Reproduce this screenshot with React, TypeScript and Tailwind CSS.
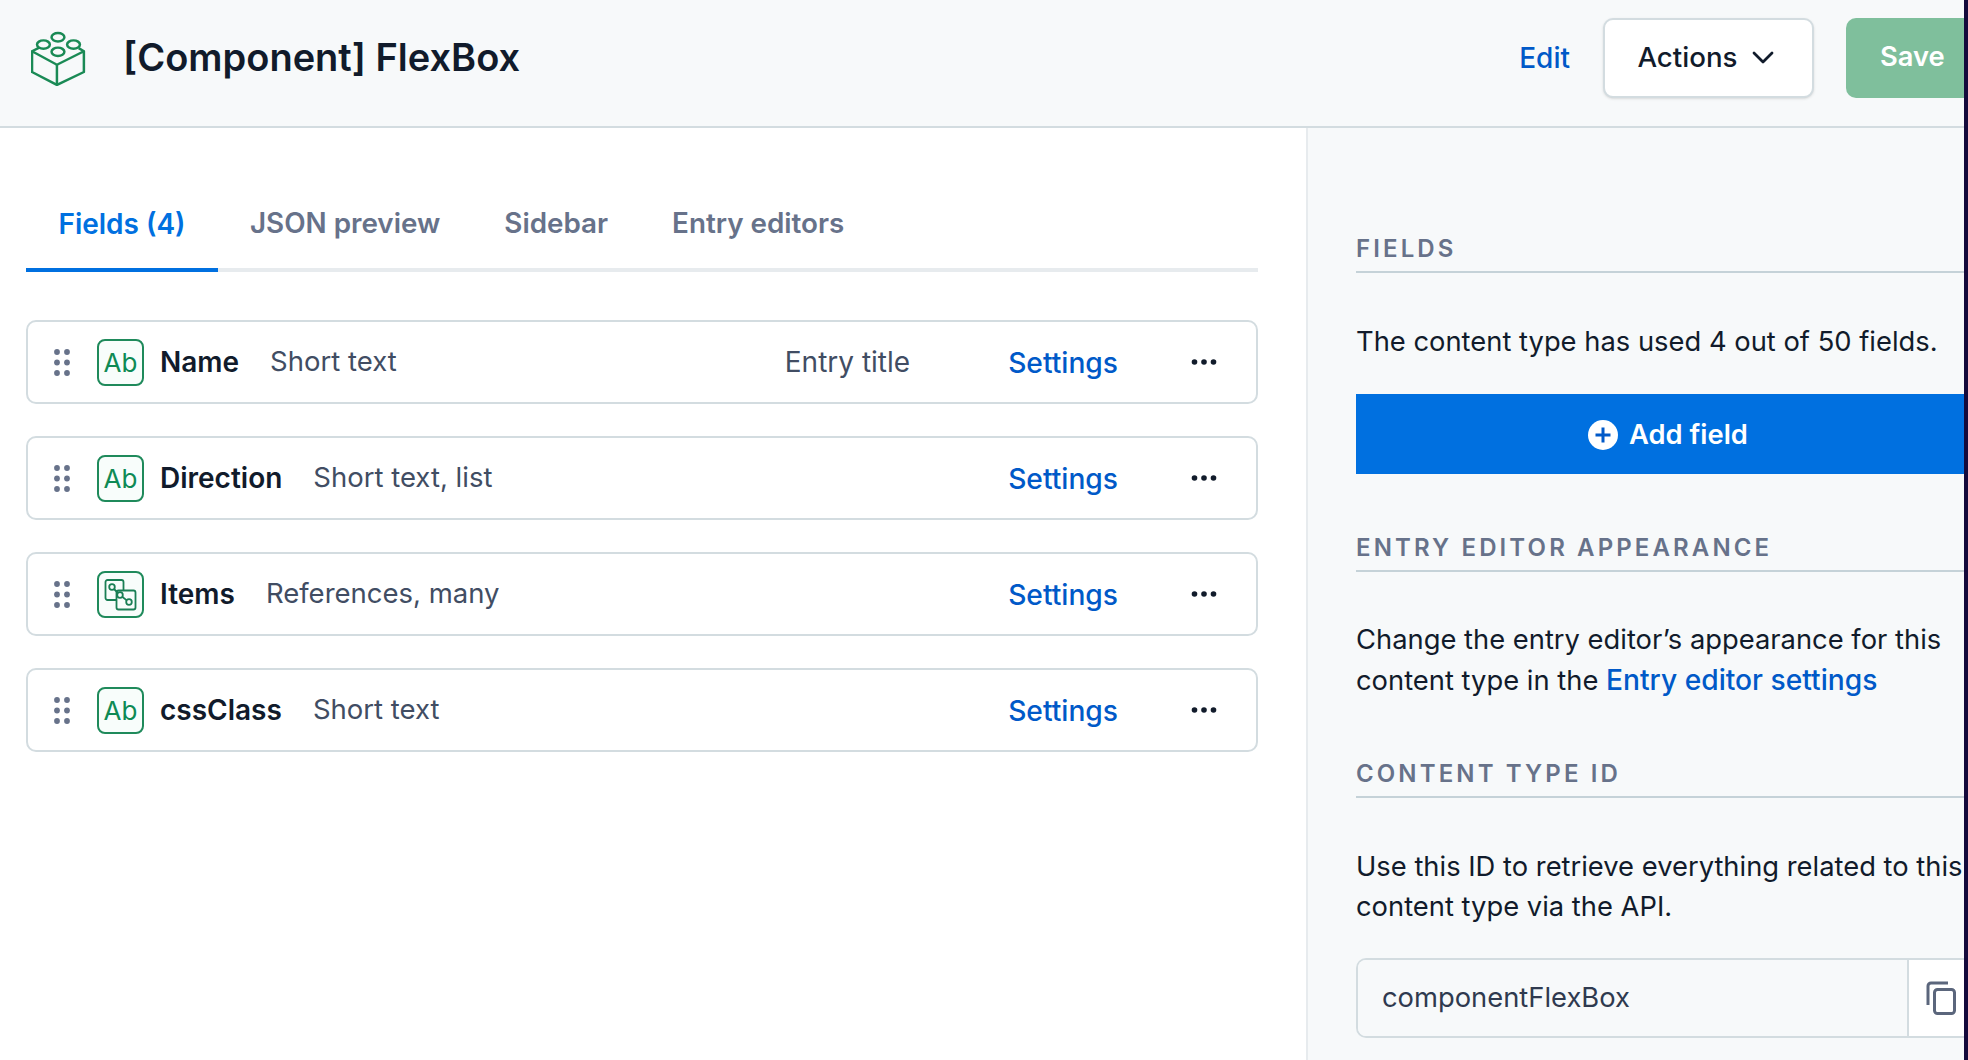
import React from "react";

const AbIcon = () => (
  <div className="w-[47px] h-[47px] shrink-0 rounded-[8px] border-2 border-[#1f8a5b] bg-[#f8fdfb] flex items-center justify-center text-[#0f8a55] text-[26px] leading-none font-normal pt-[1px]">
    Ab
  </div>
);

const RefIcon = () => (
  <div className="w-[47px] h-[47px] shrink-0 rounded-[8px] border-2 border-[#1f8a5b] bg-[#f8fdfb] flex items-center justify-center">
    <svg width="37" height="37" viewBox="0 0 37 37" fill="none" stroke="#1a7f55" strokeWidth="1.8">
      <path d="M19 24H5.500a2 2 0 0 1-2-2V6a2 2 0 0 1 2-2h14a2 2 0 0 1 2 2v8" />
      <rect x="14.500" y="14.500" width="19" height="19" rx="2" fill="#f8fdfb" />
      <circle cx="10" cy="11" r="2.800" />
      <circle cx="18" cy="19" r="2.800" />
      <circle cx="27" cy="26" r="2.800" />
      <path d="M12 13l4 4M20.200 20.800l4.600 3.600" />
    </svg>
  </div>
);

const Grip = () => (
  <svg width="16" height="27" viewBox="0 0 16 27" className="shrink-0" fill="#67728a">
    {[3, 13.5, 24].map((y) => (
      <React.Fragment key={y}>
        <circle cx="3" cy={y} r="2.900" />
        <circle cx="13" cy={y} r="2.900" />
      </React.Fragment>
    ))}
  </svg>
);

const Dots = () => (
  <svg width="26" height="8" viewBox="0 0 26 8" fill="#111b2b" className="shrink-0">
    <circle cx="3.500" cy="4" r="2.800" />
    <circle cx="13" cy="4" r="2.800" />
    <circle cx="22.500" cy="4" r="2.800" />
  </svg>
);

const Row = ({ name, type, extra, icon }: { name: string; type: string; extra?: string; icon: React.ReactNode }) => (
  <div className="h-[84px] rounded-[10px] border-2 border-[#d3dce0] bg-white flex items-center pl-[26px] pr-[39px]">
    <Grip />
    <div className="ml-[27px]">{icon}</div>
    <span className="ml-[16px] text-[28px] font-semibold text-[#111b2b]">{name}</span>
    <span className="ml-[31px] text-[27.500px] text-[#414d63]">{type}</span>
    <div className="flex-1" />
    {extra && <span className="mr-[98px] text-[28px] text-[#414d63]">{extra}</span>}
    <span className="mr-[73px] pt-[2px] text-[28.200px] font-medium text-[#0059c8]">Settings</span>
    <Dots />
  </div>
);

const SideHead = ({ children }: { children: React.ReactNode }) => (
  <div className="border-b-2 border-[#c5d2d8] h-[39px] text-[24px] leading-[30px] font-semibold tracking-[0.13em] text-[#67728a] whitespace-nowrap">
    {children}
  </div>
);

export default function App() {
  return (
    <div className="w-[1968px] h-[1060px] overflow-hidden flex bg-white text-[#111b2b] [font-family:Inter,'Liberation_Sans',sans-serif]">
      <div className="w-[1964px] h-full flex flex-col overflow-hidden">
        <header className="h-[128px] shrink-0 bg-[#f7f9fa] border-b-2 border-[#d3dce0] flex items-center pl-[31px] pb-[11px]">
          <svg width="56" height="56" viewBox="0 0 54 54" fill="none" stroke="#1a8a55" strokeWidth="2.400" strokeLinejoin="round" className="shrink-0">
            <path d="M1 20.500L25 33.500l26-13V40.500L25 53 1 40.500z" />
            <path d="M25 33.500V53" />
            <path d="M1 20.500l7-3.500M51 20.500l-5-3" />
            <ellipse cx="26" cy="7" rx="6.200" ry="4" fill="#f7f9fa" />
            <ellipse cx="12" cy="14" rx="6.200" ry="4" fill="#f7f9fa" />
            <ellipse cx="41" cy="14" rx="6.200" ry="4" fill="#f7f9fa" />
            <ellipse cx="26" cy="21" rx="6.200" ry="4" fill="#f7f9fa" />
          </svg>
          <h1 className="ml-[36px] text-[38px] font-semibold text-[#111b2b]">[Component] FlexBox</h1>
          <div className="flex-1" />
          <span className="text-[28px] font-medium text-[#0059c8]">Edit</span>
          <button className="ml-[33px] w-[211px] h-[80px] rounded-[10px] bg-white border-2 border-[#d3dce0] shadow-sm flex items-center justify-center gap-[13px] pr-[5px] text-[27.700px] font-medium text-[#111b2b]">
            Actions
            <svg width="24" height="24" viewBox="0 0 24 24" fill="none" stroke="#111b2b" strokeWidth="2.800" strokeLinecap="round" strokeLinejoin="round">
              <path d="M3 7l9 9 9-9" />
            </svg>
          </button>
          <button className="ml-[32px] w-[118px] h-[80px] rounded-l-[10px] bg-[#7fbf9c] text-white text-[27.300px] font-semibold pl-[34px] text-left">
            Save
          </button>
        </header>
        <div className="flex-1 flex min-h-0">
          <main className="w-[1306px] shrink-0 bg-white pl-[26px] pr-[48px] pt-[60px]">
            <div className="flex border-b-[4px] border-[#e7ebee] h-[84px]">
              <div className="w-[192px] h-[84px] border-b-[4px] border-[#0070e0] text-[#0070e0] text-[28px] font-semibold text-center pt-[15px]">
                Fields (4)
              </div>
              {["JSON preview", "Sidebar", "Entry editors"].map((t, i) => (
                <div
                  key={t}
                  className={`text-[27.800px] font-semibold text-[#67728a] pt-[15px] ${i === 0 ? "ml-[32px]" : "ml-[64px]"}`}
                >
                  {t}
                </div>
              ))}
            </div>
            <div className="mt-[48px] flex flex-col gap-[32px]">
              <Row name="Name" type="Short text" extra="Entry title" icon={<AbIcon />} />
              <Row name="Direction" type="Short text, list" icon={<AbIcon />} />
              <Row name="Items" type="References, many" icon={<RefIcon />} />
              <Row name="cssClass" type="Short text" icon={<AbIcon />} />
            </div>
          </main>
          <aside className="flex-1 min-w-0 bg-[#f7f9fa] border-l-2 border-[#e7ebee] pl-[48px] pt-[106px] text-[27.350px] leading-[40px] text-[#111b2b] whitespace-nowrap overflow-hidden">
            <SideHead>FIELDS</SideHead>
            <p className="mt-[49px]">The content type has used 4 out of 50 fields.</p>
            <button className="mt-[32px] w-full h-[80px] bg-[#0070e0] text-white font-semibold flex items-center justify-center gap-[11px] pl-[16px] pt-[1px]">
              <svg width="30" height="30" viewBox="0 0 30 30" className="shrink-0">
                <circle cx="15" cy="15" r="15" fill="white" />
                <path d="M15 7.500v15M7.500 15h15" stroke="#0059c8" strokeWidth="3" />
              </svg>
              Add field
            </button>
            <div className="mt-[59px]">
              <SideHead>ENTRY EDITOR APPEARANCE</SideHead>
            </div>
            <p className="mt-[48px]">
              Change the entry editor’s appearance for this
              <br />
              content type in the <span className="font-medium text-[#0059c8] text-[28.200px]">Entry editor settings</span>
            </p>
            <div className="mt-[58px]">
              <SideHead>CONTENT TYPE ID</SideHead>
            </div>
            <p className="mt-[49px]">
              Use this ID to retrieve everything related to this
              <br />
              content type via the API.
            </p>
            <div className="mt-[31px] h-[80px] flex rounded-l-[10px] border-2 border-r-0 border-[#d3dce0] overflow-hidden">
              <div className="w-[551px] flex items-center pl-[24px] text-[#2f3a4f] bg-[#f7f9fa] border-r-2 border-[#d3dce0]">
                componentFlexBox
              </div>
              <div className="flex-1 bg-white flex items-center pl-[17px]">
                <svg width="30" height="34" viewBox="0 0 30 34" fill="none" stroke="#5b667c" strokeWidth="3" strokeLinejoin="round">
                  <path d="M2 24V5a3 3 0 0 1 3-3h17" />
                  <rect x="8.500" y="8.500" width="20" height="24" rx="3" />
                </svg>
              </div>
            </div>
          </aside>
        </div>
      </div>
      <div className="w-[4px] h-full bg-[#140a3c]" />
    </div>
  );
}
